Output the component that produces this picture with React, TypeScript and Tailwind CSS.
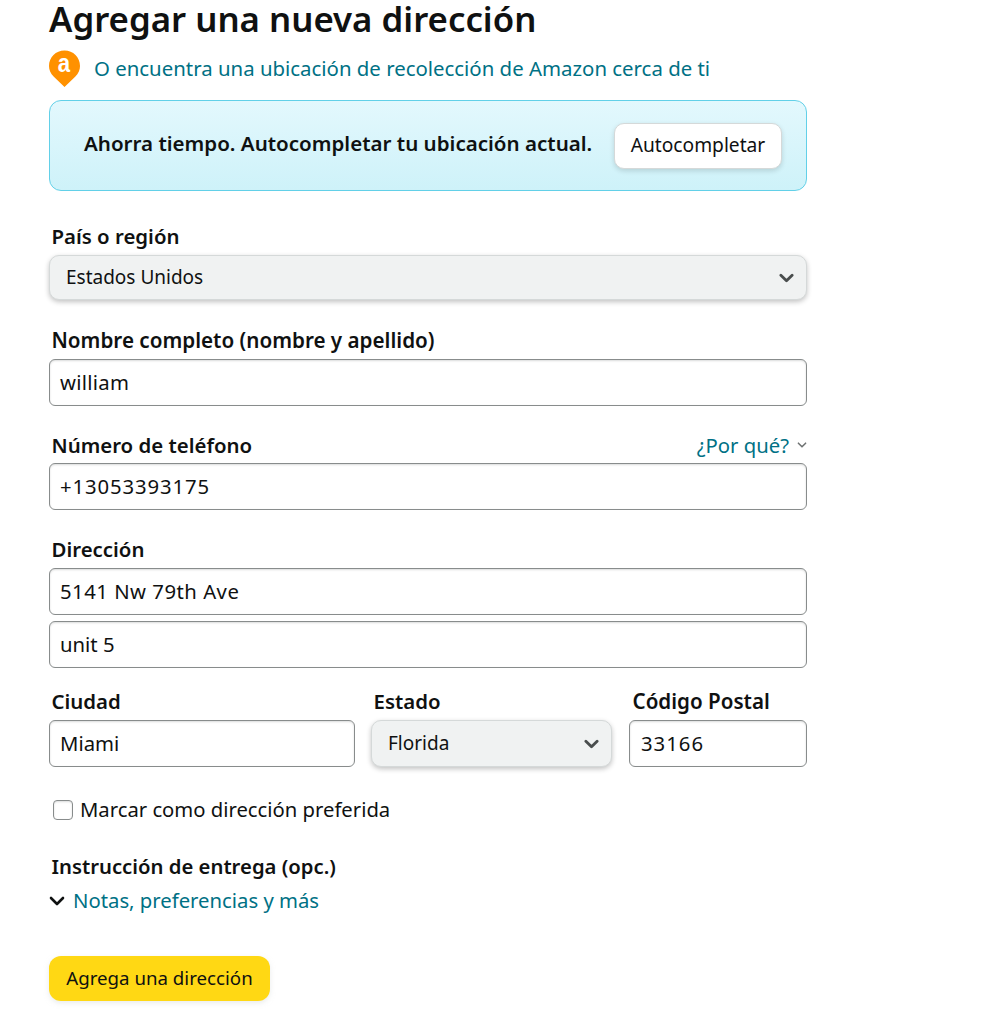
import React from "react";

function Chevron({ className, weight = "2.6" }: { className: string; weight?: string }) {
  return (
    <svg viewBox="0 0 16 10" className={className} fill="none" stroke="currentColor" strokeWidth={weight} strokeLinecap="round" strokeLinejoin="round">
      <path d="M2 2l6 6 6-6" />
    </svg>
  );
}

function Label({ children, className = "text-[20.4px]" }: { children: React.ReactNode; className?: string }) {
  return <div className={`h-[24px] pl-[2.5px] leading-[22px] font-semibold text-[#0f1111] ${className}`}>{children}</div>;
}

function Input({ value, className = "" }: { value: string; className?: string }) {
  return (
    <div className={`flex h-[47px] items-center rounded-[6px] border border-[#888c8c] bg-white pl-[10px] text-[20.3px] text-[#0f1111] shadow-[inset_0_1px_2px_rgba(15,17,17,0.15)] ${className}`}>
      {value}
    </div>
  );
}

function Select({ value, className = "" }: { value: string; className?: string }) {
  return (
    <div className={`flex items-center justify-between rounded-[10px] border border-[#d5d9d9] bg-[#f0f2f2] pl-[16px] pr-[12px] text-[19px] text-[#0f1111] shadow-[0_2px_5px_rgba(15,17,17,0.25)] ${className}`}>
      <span>{value}</span>
      <Chevron className="h-[10px] w-[15px] text-[#494d4d]" weight="3" />
    </div>
  );
}

export default function App() {
  return (
    <div className="h-[1024px] w-[1006px] overflow-hidden bg-white font-['Noto_Sans',sans-serif] text-[#0f1111]">
      <div className="ml-[49px] w-[758px]">
        <h1 className="h-[38px] text-[34.8px] leading-[38px] font-semibold">Agregar una nueva dirección</h1>
        <div className="mt-[11px] flex h-[40px] items-center">
          <svg viewBox="0 0 32 38" className="h-[38px] w-[31px] shrink-0">
            <path d="M16 37.500L5 27C1.500 23.800 0 20 0 16 0 7 7 0 16 0s16 7 16 16c0 4-1.500 7.800-5 11z" fill="#ff9100" />
            <text transform="translate(15.500 22.500) scale(0.85 1)" textAnchor="middle" fontSize="27" fontWeight="700" fill="#fff" fontFamily="Liberation Sans, sans-serif">a</text>
          </svg>
          <span className="mb-[2px] ml-[14px] text-[20.4px] text-[#007185]">O encuentra una ubicación de recolección de Amazon cerca de ti</span>
        </div>
        <div className="mt-[11px] flex h-[91px] items-center justify-between rounded-[12px] border-[1.5px] border-[#62d0e8] bg-gradient-to-b from-[#e3f8fd] to-[#cef2f9] pr-[24px] pl-[34px]">
          <span className="mb-[4px] text-[20.55px] font-semibold text-[#0f1111]">Ahorra tiempo. Autocompletar tu ubicación actual.</span>
          <div className="flex h-[46px] w-[168px] items-center justify-center rounded-[10px] border border-[#d5d9d9] bg-white text-[19.2px] text-[#0f1111] shadow-[0_2px_5px_rgba(15,17,17,0.15)]">
            Autocompletar
          </div>
        </div>

        <div className="mt-[34px]"><Label>País o región</Label></div>
        <Select value="Estados Unidos" className="mt-[6px] h-[45px]" />

        <div className="mt-[29px]"><Label className="text-[20.65px]">Nombre completo (nombre y apellido)</Label></div>
        <Input value="william" className="mt-[6px] tracking-[0.3px]" />

        <div className="mt-[28px] flex h-[24px] items-start justify-between">
          <Label>Número de teléfono</Label>
          <div className="flex items-center text-[20.3px] leading-[22px] text-[#007185]">
            ¿Por qué?
            <Chevron className="ml-[8px] h-[6px] w-[10px] text-[#6f7373]" />
          </div>
        </div>
        <Input value="+13053393175" className="mt-[5px] tracking-[0.9px]" />

        <div className="mt-[28px]"><Label>Dirección</Label></div>
        <Input value="5141 Nw 79th Ave" className="mt-[6px] tracking-[0.5px]" />
        <Input value="unit 5" className="mt-[6px]" />

        <div className="mt-[22px] flex">
          <div className="w-[306px]">
            <Label>Ciudad</Label>
            <Input value="Miami" className="mt-[6px]" />
          </div>
          <div className="ml-[16px] w-[241px]">
            <Label>Estado</Label>
            <Select value="Florida" className="mt-[6px] h-[47px]" />
          </div>
          <div className="ml-[17px] w-[178px]">
            <Label className="ml-[1px] text-[20.6px]">Código Postal</Label>
            <Input value="33166" className="mt-[6px] pl-[11px] tracking-[1px]" />
          </div>
        </div>

        <div className="mt-[31px] flex h-[24px] items-center pl-[4px]">
          <div className="h-[20px] w-[20px] rounded-[4px] border border-[#888c8c] bg-white shadow-[inset_0_1px_2px_rgba(15,17,17,0.15)]" />
          <span className="mb-[2px] ml-[7px] text-[20.25px] text-[#0f1111]">Marcar como dirección preferida</span>
        </div>

        <div className="mt-[33px]"><Label className="text-[20.3px]">Instrucción de entrega (opc.)</Label></div>
        <div className="mt-[10px] flex h-[24px] items-center">
          <Chevron className="h-[10px] w-[16px] text-[#0f1111]" />
          <span className="mb-[2px] ml-[8px] text-[20.3px] text-[#007185]">Notas, preferencias y más</span>
        </div>

        <div className="mt-[43px] flex h-[45px] w-[221px] items-center justify-center rounded-[12px] bg-[#ffd814] text-[18.7px] text-[#0f1111] shadow-[0_2px_5px_rgba(213,217,217,0.5)]">
          Agrega una dirección
        </div>
      </div>
    </div>
  );
}
